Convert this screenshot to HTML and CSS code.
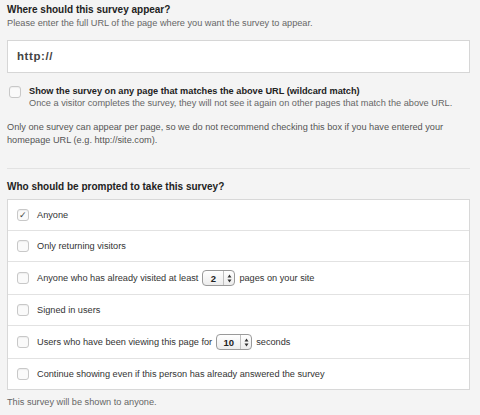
FILE: index.html
```html
<!DOCTYPE html>
<html>
<head>
<meta charset="utf-8">
<link rel="stylesheet" href="styles.css">
</head>
<body>
<div class="page">
  <h2 class="title">Where should this survey appear?</h2>
  <p class="sub">Please enter the full URL of the page where you want the survey to appear.</p>
  <div class="url">http://</div>
  <div class="wild">
    <span class="cb"></span>
    <div class="wild-text">
      <div class="wild-label">Show the survey on any page that matches the above URL (wildcard match)</div>
      <div class="sub">Once a visitor completes the survey, they will not see it again on other pages that match the above URL.</div>
    </div>
  </div>
  <p class="note">Only one survey can appear per page, so we do not recommend checking this box if you have entered your homepage URL (e.g. http://site.com).</p>
  <hr class="rule">
  <h2 class="title who">Who should be prompted to take this survey?</h2>
  <div class="list">
    <div class="row"><span class="cb checked">✓</span>Anyone</div>
    <div class="row"><span class="cb"></span>Only returning visitors</div>
    <div class="row tall"><span class="cb"></span>Anyone who has already visited at least <span class="spin"><span class="val">2</span><span class="arr"><svg width="5" height="9" viewBox="0 0 5 9"><path d="M2.5 0.5 L4.5 3.5 L0.5 3.5 Z M2.5 8.5 L4.5 5.5 L0.5 5.5 Z" fill="#333"/></svg></span></span> pages on your site</div>
    <div class="row"><span class="cb"></span>Signed in users</div>
    <div class="row tall"><span class="cb"></span>Users who have been viewing this page for <span class="spin wide"><span class="val">10</span><span class="arr"><svg width="5" height="9" viewBox="0 0 5 9"><path d="M2.5 0.5 L4.5 3.5 L0.5 3.5 Z M2.5 8.5 L4.5 5.5 L0.5 5.5 Z" fill="#333"/></svg></span></span> seconds</div>
    <div class="row last"><span class="cb"></span>Continue showing even if this person has already answered the survey</div>
  </div>
  <p class="foot">This survey will be shown to anyone.</p>
</div>
</body>
</html>
```
FILE: styles.css
```css
html, body {
  margin: 0;
  padding: 0;
  background: #f4f4f4;
}
body {
  font-family: "Liberation Sans", Arial, sans-serif;
  font-size: 9.2px;
  color: #333;
}
.page {
  padding: 3px 10px 0 7px;
}
.title {
  margin: 0;
  font-size: 10px;
  font-weight: bold;
  color: #222;
  line-height: 14px;
}
.sub {
  margin: 0;
  color: #666;
  line-height: 13px;
}
.url {
  margin-top: 10px;
  height: 33px;
  box-sizing: border-box;
  border: 1px solid #d6d6d6;
  background: #fff;
  padding: 0 9px;
  font-size: 11.5px;
  font-weight: bold;
  color: #444;
  line-height: 31px;
  letter-spacing: 0.6px;
}
.wild {
  display: flex;
  margin-top: 12px;
  gap: 8px;
}
.wild .sub, .wild-label { line-height: 12px; }
.wild .cb {
  margin-left: 2px;
  margin-top: 1px;
}
.wild-label {
  font-weight: bold;
  color: #222;
}
.note {
  margin: 12px 0 0;
  color: #555;
  line-height: 13px;
}
.rule {
  border: 0;
  border-top: 1px solid #e2e2e2;
  margin: 21px 0 0;
}
.who {
  margin-top: 11px;
}
.list {
  margin-top: 5px;
  background: #fff;
  border: 1px solid #d8d8d8;
}
.row {
  display: flex;
  align-items: center;
  height: 31px;
  padding-left: 9px;
  border-bottom: 1px solid #e2e2e2;
  box-sizing: border-box;
  color: #333;
}
.row.tall { height: 33px; }
.row.last { border-bottom: 0; height: 30px; }
.cb {
  display: inline-block;
  flex: none;
  width: 10px;
  height: 10px;
  border: 1px solid #c8c8c8;
  border-radius: 3px;
  background: #fafafa;
  box-shadow: inset 0 1px 1px rgba(0,0,0,0.05);
  font-size: 9px;
  line-height: 10px;
  text-align: center;
  color: #444;
}
.row .cb { margin-right: 8px; }
.spin {
  display: inline-flex;
  align-items: center;
  margin: 0 4px;
  height: 16px;
  width: 33px;
  box-sizing: border-box;
  border: 1px solid #9a9a9a;
  border-radius: 4px;
  background: linear-gradient(#fff, #ececec);
  font-weight: bold;
  color: #222;
}
.spin.wide { width: 36px; }
.spin .val {
  flex: 1;
  text-align: center;
  font-size: 9.5px;
}
.spin .arr {
  width: 10px;
  height: 14px;
  border-left: 1px solid #c0c0c0;
  display: flex;
  align-items: center;
  justify-content: center;
}
.foot {
  margin: 6px 0 0;
  color: #666;
  line-height: 13px;
}
```
